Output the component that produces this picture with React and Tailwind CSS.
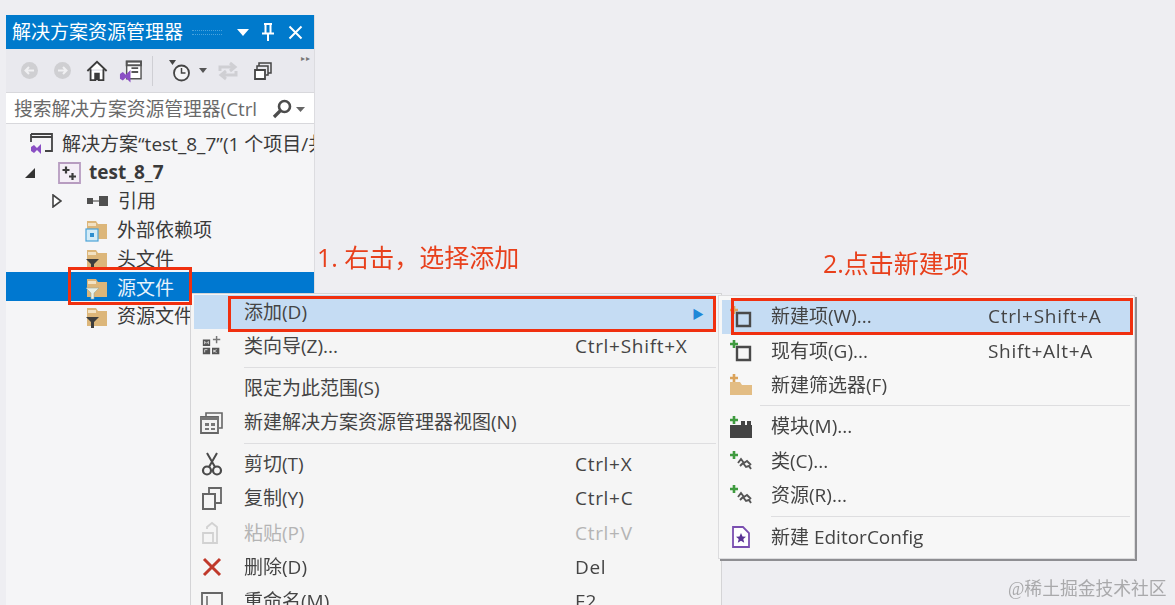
const cjk = "font-['Open_Sans','Noto_Sans_CJK_SC',sans-serif]";

function Back({ flip }) {
  return (
    <svg width="19" height="19" viewBox="0 0 19 19">
      <circle cx="9.5" cy="9.5" r="8.5" fill="#cfcfd2" />
      <path d={flip ? 'M5 9.5h8M10 6l3.5 3.5L10 13' : 'M14 9.5H6M9 6L5.5 9.5 9 13'} stroke="#f0f0f2" strokeWidth="2" fill="none" />
    </svg>
  );
}

function FolderIcon({ badge }) {
  return (
    <svg width="24" height="24" viewBox="0 0 24 24">
      <path d="M2 3h9l2 3h9v15H2z" fill="#dcb67a" />
      <path d="M3 5h8v3H3z" fill="#f2e2c4" />
      {badge === 'ext' && (
        <g>
          <rect x="1" y="11" width="12" height="12" fill="#d4ecf8" stroke="#4ba3d8" strokeWidth="1.2" />
          <rect x="5" y="15" width="4" height="4" fill="#2f8fd0" />
        </g>
      )}
      {badge === 'dark' && <path d="M1 12h13l-5 5v6H6v-6z" fill="#3d3d3d" />}
      {badge === 'light' && <path d="M1 12h13l-5 5v6H6v-6z" fill="#e8f0e8" stroke="#9aa89a" strokeWidth=".6" />}
    </svg>
  );
}

function NewItem({ color = '#dba35a' }) {
  return (
    <svg width="24" height="24" viewBox="0 0 24 24">
      <path d="M8 8h13v13H8z" fill="none" stroke="#4a4a4a" strokeWidth="2.4" />
      <path d="M1 5h8M5 1v8" stroke={color} strokeWidth="2.6" />
    </svg>
  );
}

function ClassAdd() {
  return (
    <svg width="24" height="22" viewBox="0 0 24 22">
      <path d="M1 5h8M5 1v8" stroke="#3f9b3f" strokeWidth="2.6" />
      <path d="M9 13l3-4 3 4 3-2 4 4M11 16l3-3 3 4 3-1 2 3" fill="none" stroke="#555" strokeWidth="1.9" />
    </svg>
  );
}

function Row({ icon, label, keys, active, muted, slot, labelW }) {
  return (
    <div className={`flex items-center h-[34.3px] ${active ? 'bg-[#c5dcf3]' : ''} ${muted ? 'text-[#b4b4b4]' : 'text-[#444]'}`}>
      <div className={`${slot} shrink-0 flex justify-center`}>{icon}</div>
      <div className={`${labelW} shrink-0 text-[19px] whitespace-nowrap`}>{label}</div>
      <div className="text-[19px] whitespace-nowrap tracking-[0.7px]">{keys}</div>
    </div>
  );
}

function Sep({ left, h = 'h-[7.5px]' }) {
  return (
    <div className={`${h} flex items-center ${left}`}>
      <div className="h-px w-full bg-[#dedee0]" />
    </div>
  );
}

function TreeRow({ indent, arrow, icon, children, active, bold, iconW = 'w-[32px]' }) {
  return (
    <div className={`flex items-center h-[28.8px] pt-[3px] ${indent} ${active ? 'bg-[#0078d0] text-[#e8f3fc]' : 'text-[#3a3a3a]'} ${bold ? 'font-bold' : ''}`}>
      {arrow && <div className="w-[34px] shrink-0">{arrow}</div>}
      <div className={`${iconW} shrink-0 flex`}>{icon}</div>
      <span className="whitespace-nowrap text-[19px]">{children}</span>
    </div>
  );
}

function Explorer() {
  return (
    <div className="w-[309px] h-[590px] bg-[#f5f5f7] border-r border-[#dcdce0] overflow-hidden">
      <div className="h-[34px] bg-[#007acc] flex items-center pl-[6px] text-white">
        <span className="text-[19px] whitespace-nowrap">解决方案资源管理器</span>
        <span className="ml-[9px] w-[30px] h-[5px] border-y border-dotted border-[#4aa3dc]" />
        <svg className="ml-[15px]" width="12" height="7" viewBox="0 0 12 7"><path d="M0 0h12L6 7z" fill="#fff" /></svg>
        <svg className="ml-[12px]" width="14" height="18" viewBox="0 0 14 18"><path d="M3 1h8M4.500 1v9M9.500 1v9M1 10.500h12M7 11v7" stroke="#fff" strokeWidth="2" fill="none" /></svg>
        <svg className="ml-[13px]" width="15" height="15" viewBox="0 0 15 15"><path d="M1.500 1.500l12 12M13.500 1.500l-12 12" stroke="#fff" strokeWidth="2" /></svg>
      </div>
      <div className="h-[43px] bg-[#e9e9ee] flex items-center pl-[14px] relative">
        <Back />
        <div className="ml-[14px]"><Back flip /></div>
        <svg className="ml-[14px]" width="22" height="24" viewBox="0 0 24 24"><path d="M1.500 12L12 2l10.500 10M5 10v12h5v-7h4v7h5V10" fill="#fff" stroke="#3c3c3c" strokeWidth="2" /><rect x="10" y="15" width="4" height="7" fill="#3c3c3c" /></svg>
        <svg className="ml-[11px]" width="23" height="24" viewBox="0 0 24 24"><path d="M8 2h15v18H8z" fill="#fff" stroke="#555" strokeWidth="1.500" /><path d="M8 2h15v4H8zM13 9h7M13 13h7" stroke="#555" strokeWidth="2" fill="none" /><path d="M1 15l3-2 3 3 5-5v13l-5-5-3 3-3-2z" fill="#8a4fc4" /></svg>
        <div className="ml-[10px] w-px h-[30px] bg-[#cfcfd4]" />
        <svg className="ml-[16px]" width="22" height="24" viewBox="0 0 22 24"><path d="M0 1h7L3.500 6z" fill="#444" /><circle cx="12.500" cy="14" r="7.500" fill="#f4f4f6" stroke="#444" strokeWidth="1.800" /><path d="M12.500 9v5h4" stroke="#444" strokeWidth="1.500" fill="none" /></svg>
        <svg className="ml-[8px]" width="8" height="5" viewBox="0 0 8 5"><path d="M0 0h8L4 5z" fill="#555" /></svg>
        <svg className="ml-[10px]" width="22" height="24" viewBox="0 0 22 24"><path d="M3 12V8h13M13 4l5 4-5 4M19 12v4H6M9 12l-5 4 5 4" fill="none" stroke="#cfcfd3" strokeWidth="3" /></svg>
        <svg className="ml-[15px]" width="18" height="18" viewBox="0 0 18 18"><path d="M5 4V1h12v10h-3" fill="none" stroke="#444" strokeWidth="1.500" /><path d="M3 7V4h11v9h-2" fill="none" stroke="#444" strokeWidth="1.500" /><path d="M1 8h10v9H1z" fill="#fff" stroke="#444" strokeWidth="1.800" /></svg>
        <div className="absolute right-[3px] top-[5px] text-[8px] leading-none text-[#777] tracking-[1px]">▸▸</div>
      </div>
      <div className="h-[32px] bg-white border-y border-[#d8d8dc] flex items-center pl-2 pt-[2px] pr-[5px] text-[#6a6a6a]">
        <span className="w-[247px] shrink-0 text-[18.8px] whitespace-nowrap overflow-hidden">搜索解决方案资源管理器(Ctrl</span>
        <svg className="ml-[11px]" width="20" height="20" viewBox="0 0 20 20"><circle cx="12.500" cy="7.500" r="5.500" fill="none" stroke="#4c4c4c" strokeWidth="2.600" /><path d="M8.500 11.500L2 18" stroke="#4c4c4c" strokeWidth="3.200" /></svg>
        <svg className="ml-[4px]" width="9" height="5" viewBox="0 0 9 5"><path d="M0 0h9L4.500 5z" fill="#666" /></svg>
      </div>
      <div className="pt-[4px]">
        <TreeRow indent="pl-[24px]" icon={
          <svg width="24" height="22" viewBox="0 0 24 22"><path d="M1 1h21v17h-7M1 1v8M1 4h21" fill="none" stroke="#444" strokeWidth="1.800" /><path d="M1 14l3-2 3 3 4-4v10l-4-4-3 3-3-2z" fill="#8a4fc4" /></svg>
        }>解决方案“test_8_7”(1 个项目/共 1 个)</TreeRow>
        <TreeRow bold iconW="w-[31px]" indent="pl-[18px]" arrow={<svg width="12" height="12" viewBox="0 0 12 12"><path d="M11 1v10H1z" fill="#333" /></svg>} icon={
          <svg width="24" height="22" viewBox="0 0 24 22"><path d="M1 1h21v20H1z" fill="#f4eef6" stroke="#b79cc0" strokeWidth="1.800" /><path d="M4.500 8h7M8 4.500v7M11 14.500h7M14.500 11v7" stroke="#3c3c3c" strokeWidth="2.200" /></svg>
        }>test_8_7</TreeRow>
        <TreeRow indent="pl-[46px]" arrow={<svg width="10" height="14" viewBox="0 0 10 14"><path d="M1 1l8 6-8 6z" fill="#fff" stroke="#444" strokeWidth="1.600" /></svg>} icon={
          <svg width="24" height="12" viewBox="0 0 24 12"><path d="M1 3h6v6H1zM13 1h9v10h-9z" fill="#505050" /><path d="M7 6h6" stroke="#777" strokeWidth="1.500" /></svg>
        }>引用</TreeRow>
        <TreeRow indent="pl-[79px]" icon={<FolderIcon badge="ext" />}>外部依赖项</TreeRow>
        <TreeRow indent="pl-[79px]" icon={<FolderIcon badge="dark" />}>头文件</TreeRow>
        <TreeRow active indent="pl-[79px]" icon={<FolderIcon badge="light" />}>源文件</TreeRow>
        <TreeRow indent="pl-[79px]" icon={<FolderIcon badge="dark" />}>资源文件</TreeRow>
      </div>
    </div>
  );
}

function MainMenu() {
  const p = { slot: 'w-[50px] pr-[14px]', labelW: 'w-[331px]' };
  return (
    <div className="absolute left-[190px] top-[293px] w-[532px] h-[330px] bg-[#f5f5f5] border border-[#d4d4d6] pl-[3px] pr-[5px] py-px">
      <Row {...p} active label="添加(D)" keys={<span className="ml-[117px] text-[#1e88d8] text-[12px]">▶</span>} />
      <Row {...p} label="类向导(Z)..." keys="Ctrl+Shift+X" icon={
        <svg width="22" height="24" viewBox="0 0 24 24"><path d="M2 5h8v7H2zM2 14h8v7H2zM12 14h8v7h-8z" fill="#555" /><path d="M4 10V7l2 2 2-2v3M4 19v-3h3M14 19v-3M17 16l-3 1.500 3 1.500" stroke="#ddd" strokeWidth="1" fill="none" /><path d="M17 1v8M13 5h8" stroke="#777" strokeWidth="1.600" /></svg>
      } />
      <Sep left="ml-[50px]" />
      <Row {...p} label="限定为此范围(S)" />
      <Row {...p} label="新建解决方案资源管理器视图(N)" icon={
        <svg width="24" height="24" viewBox="0 0 24 24"><path d="M6 6V2h16v15h-3" fill="none" stroke="#666" strokeWidth="1.600" /><path d="M1 6h17v16H1z" fill="#f2f2f2" stroke="#666" strokeWidth="1.800" /><path d="M1 6h17v3H1zM5 12h4v3H5zM11 12h4v3h-4zM5 17h4v2H5zM11 17h4v2h-4z" fill="#777" /></svg>
      } />
      <Sep left="ml-[50px]" />
      <Row {...p} label="剪切(T)" keys="Ctrl+X" icon={
        <svg width="22" height="24" viewBox="0 0 22 24"><path d="M6 1l8 14M16 1L8 15" stroke="#4a4a4a" strokeWidth="2" /><circle cx="6" cy="18.500" r="4" fill="none" stroke="#4a4a4a" strokeWidth="2.200" /><circle cx="16" cy="18.500" r="4" fill="none" stroke="#4a4a4a" strokeWidth="2.200" /></svg>
      } />
      <Row {...p} label="复制(Y)" keys="Ctrl+C" icon={
        <svg width="22" height="24" viewBox="0 0 22 24"><path d="M8 6V1h12v15h-5" fill="none" stroke="#666" strokeWidth="1.800" /><path d="M2 7h12v15H2z" fill="none" stroke="#666" strokeWidth="2" /></svg>
      } />
      <Row {...p} muted label="粘贴(P)" keys="Ctrl+V" icon={
        <svg width="22" height="24" viewBox="0 0 22 24"><path d="M6 8V6l5-4 5 4v16H8" fill="none" stroke="#d2d2d2" strokeWidth="1.800" /><path d="M2 12h10v10H2z" fill="none" stroke="#d2d2d2" strokeWidth="1.800" /></svg>
      } />
      <Row {...p} label="删除(D)" keys="Del" icon={
        <svg width="20" height="20" viewBox="0 0 20 20"><path d="M2 2l16 16M18 2L2 18" stroke="#c0392b" strokeWidth="3" /></svg>
      } />
      <Row {...p} label="重命名(M)" keys="F2" icon={
        <svg width="24" height="20" viewBox="0 0 24 20"><path d="M2 1h20v18H2z" fill="none" stroke="#666" strokeWidth="1.800" /><path d="M7 4v12" stroke="#666" strokeWidth="1.500" /></svg>
      } />
    </div>
  );
}

function SubMenu() {
  const p = { slot: 'w-[49px] pr-[11px]', labelW: 'w-[217px]' };
  return (
    <div className="absolute left-[718px] top-[295px] w-[417px] h-[264px] bg-[#f7f7f7] border border-[#dcdcde] pl-[3px] pr-[4px] pt-[3.500px] shadow-[2px_2px_0_#8e8e92]">
      <Row {...p} active label="新建项(W)..." keys="Ctrl+Shift+A" icon={<NewItem />} />
      <Row {...p} label="现有项(G)..." keys="Shift+Alt+A" icon={<NewItem color="#3f9b3f" />} />
      <Row {...p} label="新建筛选器(F)" icon={
        <svg width="24" height="24" viewBox="0 0 24 24"><path d="M1 9h10l2 3h10v10H1z" fill="#e3bd84" /><path d="M1 5h8M5 1v8" stroke="#dba35a" strokeWidth="2.600" /></svg>
      } />
      <Sep left="ml-[38px]" h="h-[7px]" />
      <Row {...p} label="模块(M)..." icon={
        <svg width="24" height="24" viewBox="0 0 24 24"><path d="M1 10h22v13H1z" fill="#444" /><path d="M12 6h4v4h-4zM18 6h4v4h-4z" fill="#444" /><path d="M1 5h8M5 1v8" stroke="#3f9b3f" strokeWidth="2.600" /></svg>
      } />
      <Row {...p} label="类(C)..." icon={<ClassAdd />} />
      <Row {...p} label="资源(R)..." icon={<ClassAdd />} />
      <Sep left="ml-[49px]" h="h-[8px]" />
      <Row {...p} label="新建 EditorConfig" icon={
        <svg width="20" height="24" viewBox="0 0 20 24"><path d="M2 2h10l6 6v14H2z" fill="#fff" stroke="#7a4fb0" strokeWidth="1.800" /><path d="M10 8l1.500 3.500 3.500.3-2.700 2.300.9 3.600-3.200-2-3.200 2 .9-3.600L5 11.800l3.500-.3z" fill="#5a3495" /></svg>
      } />
    </div>
  );
}

export default function App() {
  return (
    <div className="w-[1175px] h-[605px] overflow-hidden bg-[#eeeef2]">
      <div className={`relative h-[605px] blur-[0.4px] pl-[6px] pt-[15px] ${cjk}`}>
        <Explorer />
        <MainMenu />
        <SubMenu />

        <div className="absolute left-[68px] top-[267px] w-[124px] h-[38px] border-[3px] border-[#f0300f]" />
        <div className="absolute left-[228px] top-[296px] w-[488px] h-[36px] border-[3px] border-[#f0300f]" />
        <div className="absolute left-[731px] top-[298px] w-[402px] h-[37px] border-[3px] border-[#f0300f]" />

        <div className="absolute left-[317px] top-[240px] text-[25px] leading-[34px] text-[#e8401c] whitespace-nowrap">1. 右击，选择添加</div>
        <div className="absolute left-[823px] top-[246px] text-[25px] leading-[34px] text-[#e8401c] whitespace-nowrap">2.点击新建项</div>
        <div className="absolute left-[1008px] top-[578px] text-[17.800px] leading-[22px] text-[#a9a9ab] whitespace-nowrap font-['Liberation_Serif','Noto_Sans_CJK_SC',serif]">@稀土掘金技术社区</div>
      </div>
    </div>
  );
}
